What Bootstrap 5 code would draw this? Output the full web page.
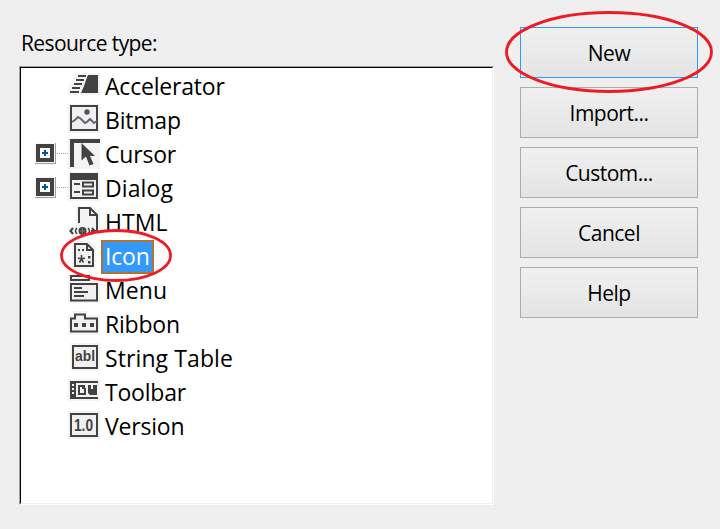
<!DOCTYPE html>
<html lang="en">
<head>
<meta charset="utf-8">
<title>Add Resource</title>
<link href="https://cdn.jsdelivr.net/npm/bootstrap@5.3.0/dist/css/bootstrap.min.css" rel="stylesheet">
<style>
body{background:#efefef;color:#000;font-family:"Open Sans","Noto Sans",sans-serif;width:720px;height:529px;overflow:hidden}
.dialog{padding:27px 22px 0 19px;gap:26px}
.type-pane{width:475px}
.type-label{font-size:21px;line-height:32px;height:39px;padding-left:2px;letter-spacing:-.6px}
.tree{height:439px;border:1px solid;border-color:#a0a0a0 #fff #fff #a0a0a0;background:#fff}
.tree-in{height:437px;border:1px solid;border-color:#000 #efefef #efefef #000;padding:2px 0 0 13px}
.tree-row{height:34px}
.tree-row svg{flex:none;display:block;overflow:visible}
.tree-text{font-size:23px;line-height:30px;letter-spacing:-.2px;height:34px;margin-left:1px;padding:0 2px;border:2px solid transparent;border-width:1px 2px;white-space:nowrap}
.tree-text.selected{background:#3399ff;border:2px solid #b5712e;color:#fff;line-height:29px}
.tree-text.wide{letter-spacing:.1px}
.actions{width:178px;gap:9px}
.btn-dlg{--bs-btn-border-radius:0;--bs-btn-border-color:#acacac;--bs-btn-color:#000;--bs-btn-font-size:21px;--bs-btn-padding-y:0;height:51px;letter-spacing:-.5px;background:linear-gradient(#f0f0f0,#e4e4e4);line-height:47px;padding-top:2px}
.btn-dlg.default{--bs-btn-border-color:#3399ff}
.ring{pointer-events:none;z-index:5}
.dk{fill:#424242}.bg{fill:#f4f4f4}.ln{fill:#f0eff1;stroke:#424242;stroke-width:2}
.no{fill:none;stroke:#424242;stroke-width:2}
.glyph{font:bold 15px "Liberation Sans",sans-serif;fill:#424242}
.glyph-num{font-size:17px}
</style>
</head>
<body>
<svg width="0" height="0" class="position-absolute" aria-hidden="true">
<symbol id="plus" viewBox="0 0 34 34" overflow="visible"><path d="M1 5h21v22H1z" fill="#f6f6f6"/><path class="dk" d="M2 6h18v18H2z"/><path fill="#fff" d="M6 10h10v10H6z"/><path d="M8 15h6M11 12v6" stroke="#00539c" stroke-width="2"/><path d="M21.500 5v21M1 25.500h21" stroke="#a0a0a0"/><path d="M23 15.500h11" stroke="#a0a0a0" stroke-dasharray="1 1"/></symbol>
</svg>
<main class="dialog d-flex">
<section class="type-pane">
<div class="type-label">Resource type:</div>
<div class="tree"><div class="tree-in">
<div class="tree-row d-flex"><svg width="34" height="34"></svg><svg width="32" height="34"><path class="bg" d="M8 3h24v22H0v-6z"/><path class="dk" d="M20 5h10v18H13l3-7 2-6z"/><path class="no" d="M10 6h8M8 10h8M6 14h8M4 18h8M2 22h9"/></svg><span class="tree-text">Accelerator</span></div>
<div class="tree-row d-flex"><svg width="34" height="34"></svg><svg width="32" height="34"><path class="bg" d="M0 0h32v29H0z"/><path class="ln" d="M3 2h26v24H3z"/><circle cx="19" cy="8" r="2.700" fill="#555"/><path d="M4 18l3-2 3-3 3 2 4 4 2-1 3-3 4 4 3-2" fill="none" stroke="#666" stroke-width="2"/></svg><span class="tree-text">Bitmap</span></div>
<div class="tree-row d-flex"><svg width="34" height="34"><use href="#plus" width="34" height="34"/></svg><svg width="32" height="34"><path class="bg" d="M0 0h32v31H0z"/><path class="dk" d="M2 1h30v4H6v24H2z"/><path class="dk" d="M13.500 5v17.500l4.500-4 3.500 9 4-1.500-3.500-8h5z"/></svg><span class="tree-text">Cursor</span></div>
<div class="tree-row d-flex"><svg width="34" height="34"><use href="#plus" width="34" height="34"/></svg><svg width="32" height="34"><path class="bg" d="M0 0h32v29H0z"/><path class="ln" d="M3 2h26v24H3z"/><path class="dk" d="M2 1h28v7H2z"/><path class="no" d="M6 12h6M6 20h6M15 10.500h10v4H15zM15 18.500h10v4H15z"/></svg><span class="tree-text wide">Dialog</span></div>
<div class="tree-row d-flex"><svg width="34" height="34"></svg><svg width="32" height="34"><path class="bg" d="M8 0h17l7 7v21H0v-7h8z"/><path class="no" d="M11 17V2h11l7 7v16h-6M22 2v7h7"/><path class="no" d="M5 22l-2.500 3L5 28M24 22l2.500 3-2.500 3"/><circle class="dk" cx="14.500" cy="25" r="4"/><path d="M9 22q-3 3 0 6M20 22q3 3 0 6" fill="none" stroke="#424242" stroke-width="1.500"/><path d="M12 25h5M14.500 22v6" stroke="#777"/></svg><span class="tree-text wide">HTML</span></div>
<div class="tree-row d-flex"><svg width="34" height="34"></svg><svg width="32" height="34"><path class="bg" d="M4 1h18l6 6v22H4z"/><path class="ln" d="M7 4h12l6 6v16H7z"/><path class="no" d="M19 4v6h6"/><path class="dk" d="M10 9h2v2h-2zM14 9h2v2h-2zM20 16h2.500v2.500H20zM20 21h2.500v2.500H20z"/><path d="M13.500 15v4M10 18l3.500 1 3.500-1M11.500 22.500l2-3.500 2 3.500" fill="none" stroke="#424242" stroke-width="1.600"/></svg><span class="tree-text selected">Icon</span></div>
<div class="tree-row d-flex"><svg width="34" height="34"></svg><svg width="32" height="34"><path class="bg" d="M0 0h24v7h8v22H0z"/><path class="ln" d="M3 2h18v4H3zM3 10h26v16.500H3z"/><path class="no" d="M6 14h8M6 18h14M6 22h10"/></svg><span class="tree-text wide">Menu</span></div>
<div class="tree-row d-flex"><svg width="34" height="34"></svg><svg width="32" height="34"><path class="bg" d="M4 3h16v4h12v20H0V7h4z"/><path class="ln" d="M3 10.500h4v-4h10v4h12v13H3z"/><path class="dk" d="M6 15h4v4H6zM14 15h4v4h-4zM22 15h4v4h-4z"/></svg><span class="tree-text">Ribbon</span></div>
<div class="tree-row d-flex"><svg width="34" height="34"></svg><svg width="32" height="34"><path class="bg" d="M2 1h30v28H2z"/><path class="ln" d="M5 4h24v22H5z"/><text class="glyph" x="7" y="19" textLength="20" lengthAdjust="spacingAndGlyphs">abl</text></svg><span class="tree-text wide">String Table</span></div>
<div class="tree-row d-flex"><svg width="34" height="34"></svg><svg width="32" height="34"><path class="bg" d="M0 3h32v22H0z"/><path class="dk" d="M2 5h28v2H8v14h22v2H2z"/><path class="bg" d="M4 8h2v2H4zM4 12h2v2H4zM4 16h2v2H4z"/><path class="no" d="M11 10h3l3 3v5h-6z"/><path class="dk" d="M20 9h3v4h2V9h4v10h-7l-2-2zM14 9h3v4h-3z"/></svg><span class="tree-text">Toolbar</span></div>
<div class="tree-row d-flex"><svg width="34" height="34"></svg><svg width="32" height="34"><path class="bg" d="M0 1h32v28H0z"/><path class="ln" d="M3 4h26v22H3z"/><text class="glyph glyph-num" x="6" y="21" textLength="19" lengthAdjust="spacingAndGlyphs">1.0</text></svg><span class="tree-text">Version</span></div>
</div></div>
</section>
<div class="actions d-flex flex-column">
<button type="button" class="btn btn-dlg default">New</button>
<button type="button" class="btn btn-dlg">Import...</button>
<button type="button" class="btn btn-dlg">Custom...</button>
<button type="button" class="btn btn-dlg">Cancel</button>
<button type="button" class="btn btn-dlg">Help</button>
</div>
</main>
<svg class="ring position-absolute top-0 start-0" width="720" height="529" fill="none" stroke="#ed1c24" stroke-width="2.800"><ellipse cx="609" cy="52" rx="102.500" ry="39.500"/><ellipse cx="116" cy="255.500" rx="54.500" ry="25"/></svg>
<script src="https://cdn.jsdelivr.net/npm/bootstrap@5.3.0/dist/js/bootstrap.bundle.min.js"></script>
</body>
</html>
